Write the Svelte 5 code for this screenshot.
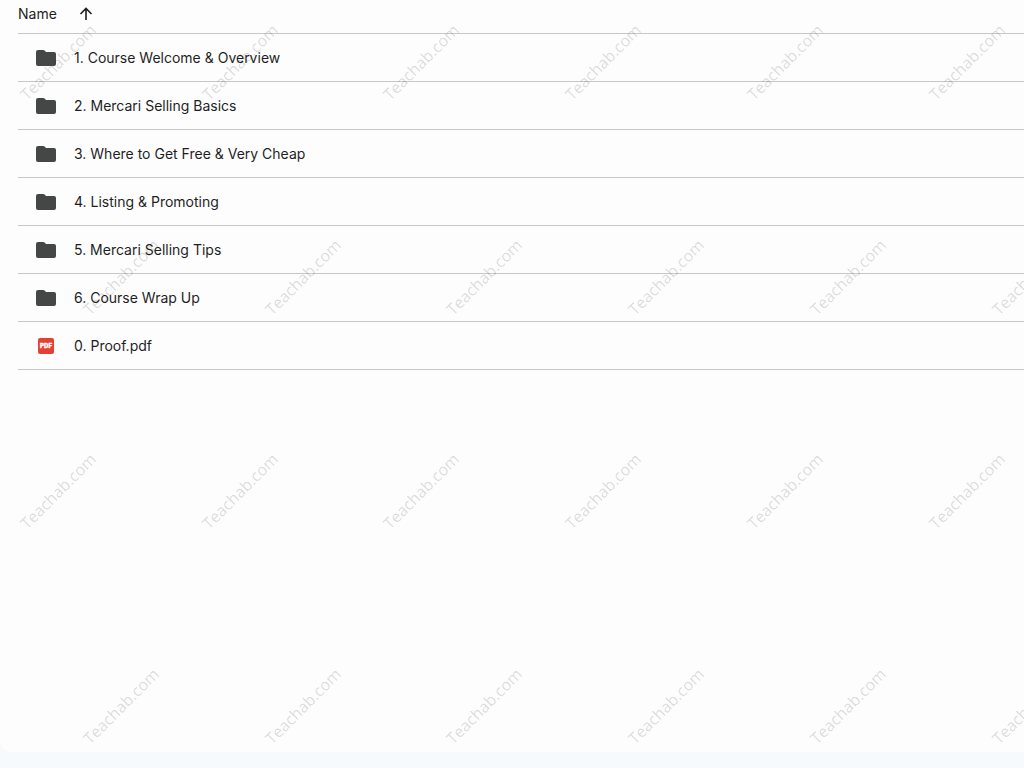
<script>
  const files = [
    { name: '1. Course Welcome & Overview', type: 'folder' },
    { name: '2. Mercari Selling Basics', type: 'folder' },
    { name: '3. Where to Get Free & Very Cheap', type: 'folder' },
    { name: '4. Listing & Promoting', type: 'folder' },
    { name: '5. Mercari Selling Tips', type: 'folder' },
    { name: '6. Course Wrap Up', type: 'folder' },
    { name: '0. Proof.pdf', type: 'pdf' }
  ];

  // Staggered grid of watermark centres: odd rows are shifted to the right.
  const marks = [];
  for (let row = 0; row < 4; row++) {
    for (let col = 0; col < 6; col++) {
      marks.push({
        x: Math.round(58 + col * 181.7 + (row % 2) * 63),
        y: Math.round(62 + row * 214.5)
      });
    }
  }
</script>

<main>
  <table>
    <thead>
      <tr>
        <th scope="col" aria-sort="ascending">
          <div class="heading">
            <span>Name</span>
            <button type="button" aria-label="Reverse sort direction">
              <svg width="14" height="14" viewBox="0 0 14 14" aria-hidden="true">
                <path d="M7 13V2M1.5 7 7 1.5 12.5 7" fill="none" stroke="currentColor" stroke-width="1.6" />
              </svg>
            </button>
          </div>
        </th>
      </tr>
    </thead>
    <tbody>
      {#each files as file}
        <tr>
          <td>
            <div class="entry">
              {#if file.type === 'folder'}
                <svg width="20" height="16" viewBox="0 0 20 16" aria-hidden="true">
                  <path d="M2 0h5.2q.8 0 1.4.6L10 2h8q2 0 2 2v10q0 2-2 2H2q-2 0-2-2V2Q0 0 2 0Z" fill="#444746" />
                </svg>
              {:else}
                <svg width="20" height="16" viewBox="0 0 20 16" aria-hidden="true">
                  <rect x="2" width="16" height="16" rx="2" fill="#e34133" />
                  <text x="10" y="10" class="badge">PDF</text>
                </svg>
              {/if}
              <span>{file.name}</span>
            </div>
          </td>
        </tr>
      {/each}
    </tbody>
  </table>
  <svg class="watermark" aria-hidden="true">
    {#each marks as mark}
      <text x={mark.x} y={mark.y} transform="rotate(-45 {mark.x} {mark.y})">Teachab.com</text>
    {/each}
  </svg>
</main>

<style>
  :global(body) {
    background: #f6fafd;
  }

  main {
    position: relative;
    box-sizing: border-box;
    min-height: calc(100vh - 16px);
    padding-left: 18px;
    background: #fdfdfd;
    border-bottom-left-radius: 12px;
    overflow: hidden;
    color: #1f1f1f;
    font-family: Inter, "Liberation Sans", sans-serif;
    font-size: 14px;
    line-height: 20px;
  }

  table {
    width: 100%;
    border-collapse: separate;
    border-spacing: 0;
  }

  th,
  td {
    padding: 0;
    border-bottom: 1px solid #c7c7c7;
    font-weight: 400;
    text-align: left;
  }

  .heading {
    display: flex;
    align-items: center;
    gap: 22px;
    height: 27px;
    padding-bottom: 6px;
  }

  button {
    display: flex;
    padding: 0;
    border: 0;
    background: none;
    color: #1f1f1f;
  }

  .entry {
    display: flex;
    align-items: center;
    gap: 18px;
    height: 47px;
    padding-left: 18px;
  }

  .badge {
    fill: #fff;
    font-size: 6px;
    font-weight: 900;
    text-anchor: middle;
    stroke: #fff;
    stroke-width: 0.3;
  }

  .watermark {
    position: absolute;
    inset: 0;
    width: 100%;
    height: 100%;
    pointer-events: none;
  }

  .watermark text {
    fill: #000;
    fill-opacity: 0.15;
    font-family: "Open Sans", sans-serif;
    font-size: 16px;
    text-anchor: middle;
    dominant-baseline: central;
  }
</style>
